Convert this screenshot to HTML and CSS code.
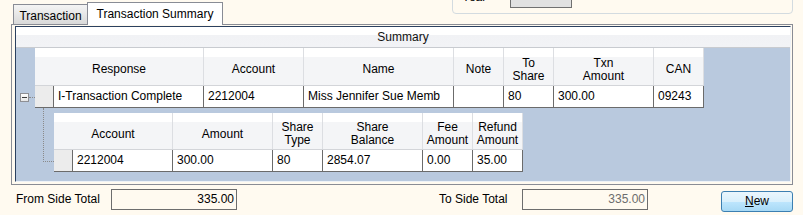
FILE: index.html
```html
<!DOCTYPE html>
<html>
<head>
<meta charset="utf-8">
<link rel="stylesheet" href="styles.css">
</head>
<body>
<div class="top">
  <div class="tabs">
    <div class="tab">Transaction</div>
    <div class="tab active">Transaction Summary</div>
  </div>
  <div class="group">
    <span class="glabel">Year</span>
    <span class="gbox"></span>
  </div>
</div>
<div class="panel">
  <div class="grid">
    <div class="caption">Summary</div>
    <div class="hdr main-hdr">
      <div class="hc w169">Response</div>
      <div class="hc w100">Account</div>
      <div class="hc w150">Name</div>
      <div class="hc w50">Note</div>
      <div class="hc w50">To<br>Share</div>
      <div class="hc w100">Txn<br>Amount</div>
      <div class="hc w50">CAN</div>
    </div>
    <div class="row">
      <div class="expander"><span class="minus"></span><span class="hdots"></span></div>
      <div class="sel"></div>
      <div class="c w150">I-Transaction Complete</div>
      <div class="c w100">2212004</div>
      <div class="c w150">Miss Jennifer Sue Memb</div>
      <div class="c w50"></div>
      <div class="c w50">80</div>
      <div class="c w100">300.00</div>
      <div class="c w50">09243</div>
    </div>
    <div class="child">
      <div class="tree"></div>
      <div class="childband">
        <div class="hdr child-hdr">
          <div class="hc w119">Account</div>
          <div class="hc w100">Amount</div>
          <div class="hc w50">Share<br>Type</div>
          <div class="hc w100">Share<br>Balance</div>
          <div class="hc w50">Fee<br>Amount</div>
          <div class="hc w50">Refund<br>Amount</div>
        </div>
        <div class="row">
          <div class="sel"></div>
          <div class="c w100">2212004</div>
          <div class="c w100">300.00</div>
          <div class="c w50">80</div>
          <div class="c w100">2854.07</div>
          <div class="c w50">0.00</div>
          <div class="c w50">35.00</div>
        </div>
      </div>
    </div>
  </div>
</div>
<div class="footer">
  <div class="flabel from">From Side Total</div>
  <div class="tbox">335.00</div>
  <div class="flabel to">To Side Total</div>
  <div class="tbox dim">335.00</div>
  <button class="btn"><u>N</u>ew</button>
</div>
</body>
</html>
```
FILE: styles.css
```css
html, body {
  margin: 0;
  padding: 0;
}
body {
  background: #fffaf0;
  font-family: "Liberation Sans", Arial, sans-serif;
  font-size: 12px;
  line-height: 14px;
  color: #000;
  width: 803px;
  height: 215px;
  overflow: hidden;
}

/* top strip */
.top {
  display: flex;
  height: 24px;
}
.tabs {
  display: flex;
  align-items: flex-end;
  padding-left: 13px;
  height: 24px;
}
.tab {
  box-sizing: border-box;
  width: 75px;
  height: 20px;
  border: 1px solid #898c95;
  border-bottom: none;
  background: linear-gradient(#f4f4f4, #d9d9d9);
  padding-top: 4px;
  text-align: center;
  white-space: nowrap;
}
.tab.active {
  width: 136px;
  height: 23px;
  margin-left: -1px;
  margin-bottom: -1px;
  background: #fff;
  position: relative;
  z-index: 1;
}
.group {
  box-sizing: border-box;
  align-self: flex-start;
  margin-top: -12px;
  margin-left: 229px;
  width: 341px;
  height: 26px;
  border: 1px solid #d3dbe0;
  border-radius: 4px;
  display: flex;
  align-items: flex-end;
  padding-left: 9px;
}
.glabel {
  width: 48px;
  margin-bottom: 9px;
}
.gbox {
  box-sizing: border-box;
  width: 62px;
  height: 20px;
  margin-bottom: 5px;
  border: 1px solid #707070;
  background: #e1e1e1;
}

/* tab panel */
.panel {
  box-sizing: border-box;
  margin-left: 11px;
  width: 782px;
  height: 161px;
  border: 1px solid #898c95;
  padding: 1px 1px 2px 3px;
}
.grid {
  box-sizing: border-box;
  width: 776px;
  height: 156px;
  border: 1px solid;
  border-color: #2b405f #eef2f7 #eef2f7 #2b405f;
  background: #b9c9de;
  overflow: hidden;
}
.caption {
  height: 20px;
  line-height: 20px;
  border-bottom: 1px solid #c8cbd0;
  background: linear-gradient(#fff 0, #fff 8px, #f1f2f5 8px, #f2f3f6);
  text-align: center;
  color: #111;
}

/* headers */
.hdr {
  display: flex;
  box-sizing: border-box;
  border-bottom: 1px solid #d3d5d9;
}
.main-hdr {
  margin-left: 19px;
  width: 669px;
  height: 38px;
}
.child-hdr {
  width: 469px;
  height: 37px;
}
.hc {
  box-sizing: border-box;
  height: 100%;
  border-right: 1px solid #dcdee2;
  background: linear-gradient(#fff 0, #fff 9px, #f4f5f7 9px);
  display: flex;
  align-items: center;
  justify-content: center;
  text-align: center;
  padding-top: 6px;
  line-height: 13px;
  white-space: nowrap;
}

.w169 { width: 169px; }
.w150 { width: 150px; }
.w119 { width: 119px; }
.w100 { width: 100px; }
.w50 { width: 50px; }

/* rows */
.row {
  display: flex;
  height: 22px;
}
.c, .sel {
  box-sizing: border-box;
  height: 22px;
  border-right: 1px solid #6b6b6b;
  border-bottom: 1px solid #6b6b6b;
  background: #fff;
  line-height: 21px;
  padding-left: 4px;
  white-space: nowrap;
  overflow: hidden;
}
.sel {
  width: 19px;
  padding: 0;
  background: #ececec;
}
.expander {
  box-sizing: border-box;
  width: 19px;
  height: 22px;
  padding-left: 4px;
  padding-top: 7px;
  display: flex;
  align-items: flex-start;
}
.minus {
  box-sizing: border-box;
  width: 9px;
  height: 9px;
  border: 1px solid #8e8f94;
  background: linear-gradient(#fdfdfd, #e6e6e6);
  display: flex;
  align-items: center;
  justify-content: center;
}
.minus::before {
  content: "";
  width: 5px;
  height: 1px;
  background: #3b3b3b;
}
.hdots {
  width: 6px;
  margin-top: 4px;
  border-top: 1px dotted #8a8a8a;
}

/* child band */
.child {
  display: flex;
  align-items: flex-start;
}
.tree {
  box-sizing: border-box;
  margin-left: 27px;
  width: 11px;
  height: 54px;
  border-left: 1px dotted #8a8a8a;
  border-bottom: 1px dotted #8a8a8a;
}
.childband {
  margin-top: 5px;
}

/* footer */
.footer {
  display: flex;
  align-items: flex-start;
  margin-top: 4px;
  padding-left: 16px;
}
.flabel {
  line-height: 21px;
  white-space: nowrap;
}
.from { width: 95px; }
.to { width: 83px; margin-left: 202px; }
.tbox {
  box-sizing: border-box;
  width: 126px;
  height: 21px;
  border: 1px solid #6d6d6d;
  line-height: 19px;
  text-align: right;
  padding-right: 2px;
}
.tbox.dim {
  color: #6d6d6d;
}
.btn {
  box-sizing: border-box;
  margin: 2px 0 0 73px;
  width: 72px;
  height: 21px;
  padding: 0;
  border: 1px solid #3c7fb1;
  border-radius: 3px;
  background: linear-gradient(#eaf6fd 0%, #d9f0fc 50%, #bee6fd 51%, #a7d9f5 100%);
  font-family: "Liberation Sans", Arial, sans-serif;
  font-size: 12px;
  line-height: 19px;
  color: #000;
  text-align: center;
}
.btn u {
  text-decoration-color: #000;
}
```
